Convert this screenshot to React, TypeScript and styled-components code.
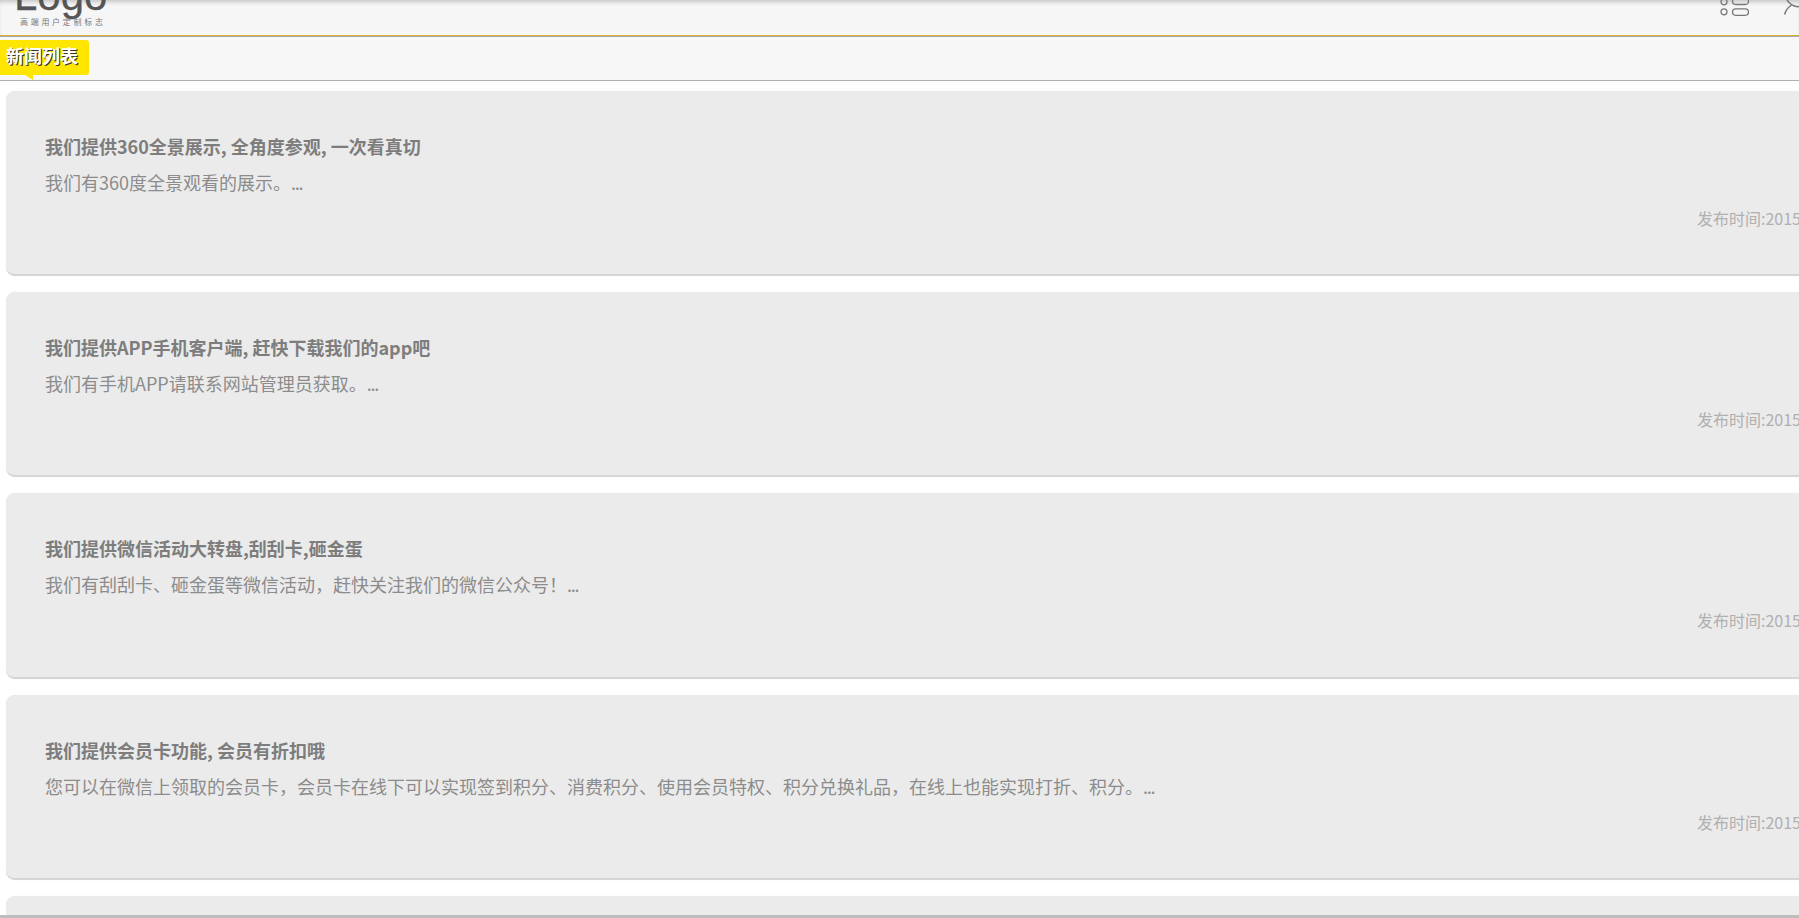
import React from "react";
import styled, { createGlobalStyle } from "styled-components";

const Global = createGlobalStyle`
  html, body { margin: 0; padding: 0; background: #fff; height: 100%; overflow: hidden; }
  body { font-family: "Noto Sans CJK SC", "Open Sans", sans-serif; }
`;
const Page = styled.div`
  width: 1799px;
  height: 918px;
  overflow: hidden;
  position: relative;
`;
const Header = styled.header`
  height: 35px;
  background: #f6f6f6;
  border-bottom: 1px solid #d9ae3b;
  box-shadow: inset 0 4px 4px -2px #c4c4c4;
  display: flex;
  justify-content: space-between;
  align-items: flex-end;
  overflow: hidden;
`;
const Brand = styled.div`
  display: flex;
  flex-direction: column;
  align-items: flex-start;
  padding: 0 0 8px 14px;
`;
const LogoWord = styled.div`
  font-family: "Liberation Sans", sans-serif;
  font-size: 42px;
  line-height: 30px;
  -webkit-text-stroke: 0.3px #555;
  color: #555;
  margin-bottom: 4px;
`;
const Tagline = styled.div`
  font-size: 8px;
  line-height: 10px;
  letter-spacing: 2.7px;
  color: #777;
  margin-left: 6px;
  margin-top: 2px;
`;
const Tools = styled.div`
  align-self: flex-start;
  display: flex;
  align-items: flex-start;
  gap: 34px;
`;
const Bar = styled.div`
  height: 40px;
  background: #f7f7f7;
  border-top: 1px solid #a8a8a8;
  border-bottom: 1px solid #b0b0b0;
  padding-top: 3px;
`;
const Tag = styled.div`
  position: relative;
  width: 89px;
  height: 35px;
  box-sizing: border-box;
  padding-left: 6px;
  background: #ffe600;
  border-radius: 0 3px 3px 0;
  color: #fff;
  font-size: 18px;
  font-weight: 700;
  line-height: 30px;
  text-shadow: 1px 1px 0 #333;
  &::after {
    content: "";
    position: absolute;
    left: 25px;
    top: 35px;
    border-top: 5px solid #ffe600;
    border-left: 8px solid transparent;
  }
`;
const List = styled.div`
  display: flex;
  flex-direction: column;
  gap: 16px;
  padding: 10px 0 0 6px;
  width: 1900px;
`;
const Card = styled.article`
  height: 185.2px;
  flex: none;
  box-sizing: border-box;
  padding: 41px 39px 0;
  background: #ebebeb;
  border-radius: 9px;
  border-bottom: 2px solid #d6d6d6;
  box-shadow: 0 0 1px #ddd;
`;
const Title = styled.h3`
  margin: 0;
  font-size: 18px;
  font-weight: 700;
  line-height: 28px;
  color: #7d7d7d;
`;
const Desc = styled.p`
  margin: 8px 0 0;
  font-size: 18px;
  line-height: 28px;
  color: #8c8c8c;
`;
const Dots = styled.span`
  letter-spacing: -1.3px;
`;
const DateLine = styled.div`
  margin-top: 8px;
  padding-left: 1652px;
  font-size: 16px;
  line-height: 28px;
  color: #b0b0b0;
  white-space: nowrap;
`;
const Footer = styled.div`
  position: absolute;
  left: 0;
  right: 0;
  bottom: 0;
  height: 3px;
  background: #bdbdbd;
`;

const items = [
  { t: "我们提供360全景展示, 全角度参观, 一次看真切", d: "我们有360度全景观看的展示。" },
  { t: "我们提供APP手机客户端, 赶快下载我们的app吧", d: "我们有手机APP请联系网站管理员获取。" },
  { t: "我们提供微信活动大转盘,刮刮卡,砸金蛋", d: "我们有刮刮卡、砸金蛋等微信活动，赶快关注我们的微信公众号！" },
  { t: "我们提供会员卡功能, 会员有折扣哦", d: "您可以在微信上领取的会员卡，会员卡在线下可以实现签到积分、消费积分、使用会员特权、积分兑换礼品，在线上也能实现打折、积分。" },
  { t: "", d: "" },
];

export default function App() {
  return (
    <Page>
      <Global />
      <Header>
        <Brand>
          <LogoWord>Logo</LogoWord>
          <Tagline>高端用户定制标志</Tagline>
        </Brand>
        <Tools>
          <svg width="30" height="18" viewBox="0 0 30 18" fill="none" stroke="#777" strokeWidth="1.3">
            <circle cx="4" cy="1.8" r="3" />
            <rect x="12.5" y="-2" width="16" height="6.5" rx="3.2" />
            <circle cx="4" cy="11.8" r="3" />
            <rect x="12.5" y="8.8" width="16" height="6.5" rx="3.2" />
          </svg>
          <svg width="15" height="16" viewBox="0 0 15 16" fill="none" stroke="#777" strokeWidth="1.5">
            <circle cx="15" cy="-7" r="13.7" />
            <path d="M0.7 14.5C1.5 10.5 4 7.5 7.5 5" />
          </svg>
        </Tools>
      </Header>
      <Bar>
        <Tag>新闻列表</Tag>
      </Bar>
      <List>
        {items.map((it, i) => (
          <Card key={i}>
            <Title>{it.t}</Title>
            <Desc>
              {it.d}
              {it.d && <Dots>...</Dots>}
            </Desc>
            {it.t && <DateLine>发布时间:2015-08-20</DateLine>}
          </Card>
        ))}
      </List>
      <Footer />
    </Page>
  );
}
